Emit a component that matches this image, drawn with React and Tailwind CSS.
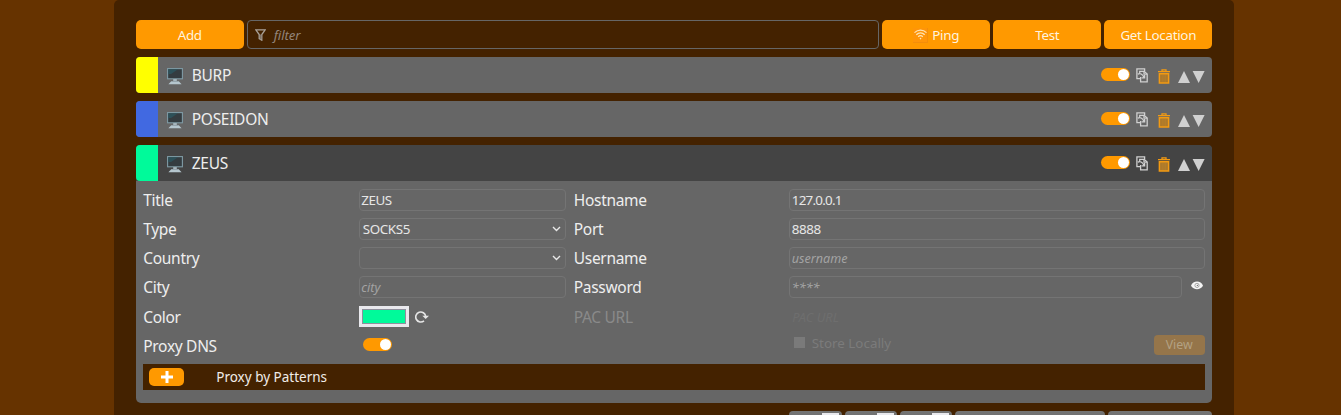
import React from 'react';

function Monitor() {
  return (
    <svg className="h-[17px] w-4 shrink-0" viewBox="0 0 16 17">
      <rect x="0.6" y="0.6" width="14.8" height="10.2" fill="#343c40" stroke="#7f9ba5" strokeWidth="1.1" />
      <path d="M1.3 1.3H11L4 6H1.3Z" fill="#2b5861" opacity="0.75" />
      <path d="M6.2 11.3H9.8V13H11.5L14.6 16.3H1.4L4.5 13H6.2Z" fill="#b5c6ce" />
      <path d="M4.4 13.2H11.6" stroke="#66747a" strokeWidth="0.6" />
    </svg>
  );
}

function CopyIcon() {
  return (
    <svg className="h-[15px] w-3 shrink-0" viewBox="0 0 12 15" fill="none" stroke="#d0d0d0" strokeWidth="1.3">
      <path d="M4 10.7H0.9V0.9H8.6V3" />
      <path d="M3.7 5V3.3H8.2L11.2 6V13.9H4.6V9" />
      <path d="M8 3.3V6.2H11" />
      <path d="M1.8 6.2C4 4.6 6.4 6.4 8 9.2M8.6 7V9.8H5.6" />
    </svg>
  );
}

function TrashIcon() {
  return (
    <svg className="h-[15px] w-3 shrink-0" viewBox="0 0 12 15">
      <path d="M4 2V0.8H8V2M0 2.6H12" fill="none" stroke="#f39a12" strokeWidth="1.3" />
      <path d="M1.4 4.7H10.6V14H1.4Z" fill="#a9782d" stroke="#f39a12" strokeWidth="1.5" />
      <path d="M4.2 6V13M6 6V13M7.8 6V13" stroke="#c28526" strokeWidth="0.6" />
    </svg>
  );
}

function Toggle() {
  return (
    <div className="flex h-[13px] w-[29px] shrink-0 items-center justify-end rounded-full bg-[#ff9900] pr-px">
      <div className="size-[11px] rounded-full bg-white" />
    </div>
  );
}

const headTones = {
  yellow: 'bg-[#ffff00]',
  blue: 'bg-[#4169e1]',
  green: 'bg-[#00fa9a]',
};

function ProxyHead({ name, tone, open }) {
  return (
    <div className={`flex h-9 items-center overflow-hidden pr-[7px] ${open ? 'rounded-t-[4px] bg-[#444444]' : 'rounded-[4px] bg-[#666666]'}`}>
      <div className={`h-full w-[22.5px] ${headTones[tone]} ${open ? 'rounded-bl-[4px]' : ''}`} />
      <div className="ml-[8.5px] pt-[2px]"><Monitor /></div>
      <div className="ml-[9px] flex-1 text-[15.5px] leading-6 tracking-[-0.3px] text-[#eeeeee]">{name}</div>
      <div className="mb-[2px]"><Toggle /></div>
      <div className="ml-[6.5px] pt-px"><CopyIcon /></div>
      <div className="ml-2.5 pt-[3px]"><TrashIcon /></div>
      <svg className="ml-2 mt-[3px] h-3 w-[27px] shrink-0" viewBox="0 0 27 12" fill="#d0d0d0">
        <path d="M6 0L12 12H0Z" />
        <path d="M14.6 0H26.6L20.6 12Z" />
      </svg>
    </div>
  );
}

function ToolButton({ children }) {
  return (
    <button className="flex h-[29px] w-[108px] shrink-0 items-center justify-center gap-1 rounded-[5px] bg-[#ff9900] pt-px text-[13.4px] tracking-[-0.3px] text-[#fff3df]">
      {children}
    </button>
  );
}

function Row({ label, muted, children }) {
  return (
    <div className="flex h-[29px] items-center gap-2">
      <div className={`w-[207.5px] shrink-0 pt-px text-[15.5px] leading-6 tracking-[-0.3px] ${muted ? 'text-[#8a8a8a]' : 'text-[#eeeeee]'}`}>{label}</div>
      <div className="flex min-w-0 flex-1 items-center">{children}</div>
    </div>
  );
}

function Field({ value, hint, numeric }) {
  return (
    <div className={`flex h-[22px] min-w-0 flex-1 items-center rounded-[4px] border border-[#747474] px-[1.5px] pt-px text-[13.4px] text-[#e6e6e6] ${numeric ? 'tracking-[-0.75px]' : 'tracking-[-0.45px]'}`}>
      {value}
      {hint && <span className="pt-[3px] text-[12.6px] tracking-normal italic text-[#a3a3a3]">{hint}</span>}
    </div>
  );
}

function Select({ value }) {
  return (
    <div className="flex h-[22px] flex-1 items-center justify-between rounded-[4px] border border-[#747474] pl-[3px] pr-1 text-[13.4px] tracking-[-0.4px] text-[#e6e6e6]">
      <span className="pt-px">{value}</span>
      <svg className="h-[6px] w-[9px]" viewBox="0 0 9 6" fill="none" stroke="#e8e8e8" strokeWidth="1.4">
        <path d="M1 1L4.5 4.5L8 1" />
      </svg>
    </div>
  );
}

function ColorSwatch() {
  return (
    <div className="h-[21px] w-[50px] bg-[#e9e9ed] p-[3px]">
      <div className="h-full w-full border border-[#8f8f9d] bg-[#00fa9a]" />
    </div>
  );
}

function SmallPart() {
  return (
    <div className="flex h-[29px] w-[52.3px] justify-end rounded-[4px] bg-linear-to-b from-[#747474] to-[#626262] pr-[3px] pt-[2px]">
      <div className="flex h-5 w-[17px] justify-center bg-[#e9e9ed] pt-[2px]">
        <div className="h-2 w-2 rounded-full bg-[#d5d5da]" />
      </div>
    </div>
  );
}

export default function App() {
  return (
    <div className="flex h-[415px] w-[1341px] justify-center overflow-hidden bg-[#663300] pl-[7px] font-['Noto_Sans',sans-serif]">
      <main className="flex h-[460px] w-[1120.5px] flex-col gap-2 rounded-t-[5px] bg-[#442200] px-[22px] pt-5">
        <div className="flex h-[29px] shrink-0 gap-[3px]">
          <ToolButton>Add</ToolButton>
          <div className="flex flex-1 items-center rounded-[4px] border border-[#666666] pl-[7px]">
            <svg className="h-3 w-[11px]" viewBox="0 0 11 12" fill="none" stroke="#aaa39a" strokeWidth="1.3">
              <path d="M0.8 0.8H10.2L6.8 5.5V11.2L4.2 9.6V5.5Z" />
              <path d="M5.8 5.5V10.5" stroke="#8b8279" />
            </svg>
            <span className="ml-2 pt-[3px] text-[13.2px] italic tracking-[-0.1px] text-[#93857a]">filter</span>
          </div>
          <ToolButton>
            <span className="flex h-[15px] w-[15px] items-center justify-center border-b border-r border-[#f38d0a] bg-[#ff9508]">
              <svg className="h-[11px] w-[13px]" viewBox="0 0 13 11" fill="none" stroke="#ffe4b5" strokeWidth="1.3">
                <path d="M0.5 3.6C4 0.2 9 0.2 12.5 3.6M2.3 5.8C4.8 3.3 8.2 3.3 10.7 5.8M4.2 7.8C5.6 6.4 7.4 6.4 8.8 7.8" />
                <circle cx="6.5" cy="9.6" r="0.8" fill="#ffe4b5" stroke="none" />
              </svg>
            </span>
            Ping
          </ToolButton>
          <ToolButton>Test</ToolButton>
          <ToolButton>Get Location</ToolButton>
        </div>

        <ProxyHead name="BURP" tone="yellow" />
        <ProxyHead name="POSEIDON" tone="blue" />

        <section className="h-[257.5px] shrink-0 rounded-[5px] bg-[#666666]">
          <ProxyHead name="ZEUS" tone="green" open />
          <div className="px-[7.5px] pt-1">
            <div className="flex h-[179px] gap-2">
              <div className="w-[422.5px]">
                <Row label="Title"><Field value="ZEUS" /></Row>
                <Row label="Type"><Select value="SOCKS5" /></Row>
                <Row label="Country"><Select value="" /></Row>
                <Row label="City"><Field hint="city" /></Row>
                <div className="pt-px">
                  <Row label="Color">
                    <ColorSwatch />
                    <svg className="ml-[6px] h-3 w-[14px]" viewBox="0 0 14 12" fill="none" stroke="#e6e6e6" strokeWidth="1.6">
                      <path d="M9 9.8A5 5 0 1 1 10.7 5.3" />
                      <path d="M7.3 4.7H14L10.7 8Z" fill="#e6e6e6" stroke="none" />
                    </svg>
                  </Row>
                </div>
                <Row label="Proxy DNS"><div className="mb-[2px] ml-1"><Toggle /></div></Row>
              </div>
              <div className="min-w-0 flex-1">
                <Row label="Hostname"><Field value="127.0.0.1" numeric /></Row>
                <Row label="Port"><Field value="8888" /></Row>
                <Row label="Username"><Field hint="username" /></Row>
                <Row label="Password">
                  <Field hint="****" />
                  <svg className="mb-[2px] ml-[9px] mr-[2px] h-[9px] w-3" viewBox="0 0 12 9">
                    <path d="M0 4.8C2-0.8 10-0.8 12 4.8C9.5 9.3 2.5 9.3 0 4.8Z" fill="#f4f4f4" />
                    <circle cx="6" cy="4.4" r="2.1" fill="none" stroke="#888888" strokeWidth="0.7" />
                    <circle cx="6.4" cy="4.4" r="0.7" fill="#777777" />
                  </svg>
                </Row>
                <div className="pt-px">
                  <Row label="PAC URL" muted>
                    <span className="pl-[3px] pt-[2px] text-[12.8px] italic text-[#6e6e6e]">PAC URL</span>
                  </Row>
                </div>
                <div className="flex h-[29px] items-center pb-[3px] pl-[220px] text-[13.4px] text-[#7b7b7b]">
                  <div className="mb-[3px] size-[11px] bg-[#7a7a7a]" />
                  <span className="mb-[2px] ml-[7px] flex-1">Store Locally</span>
                  <button className="mt-px h-5 w-[51px] rounded-[4px] bg-[#95754a] text-[12.4px] leading-5 text-[#b3a183]">View</button>
                </div>
              </div>
            </div>
            <div className="flex h-[26px] items-center bg-[#442200] pl-[6px]">
              <button className="flex h-[18px] w-[35px] items-center justify-center rounded-[5px] bg-[#ff9900]">
                <svg className="size-3" viewBox="0 0 12 12" stroke="#fff" strokeWidth="3">
                  <path d="M6 0V12M0 6H12" />
                </svg>
              </button>
              <span className="ml-8 text-[13.5px] text-[#f0ece8]">Proxy by Patterns</span>
            </div>
          </div>
        </section>

        <div className="flex shrink-0 justify-end gap-[3px]">
          <SmallPart />
          <SmallPart />
          <SmallPart />
          <div className="h-[29px] w-[150px] rounded-[4px] bg-linear-to-b from-[#747474] to-[#626262]" />
          <div className="h-[29px] w-[104px] rounded-[4px] bg-linear-to-b from-[#747474] to-[#626262]" />
        </div>
      </main>
    </div>
  );
}
